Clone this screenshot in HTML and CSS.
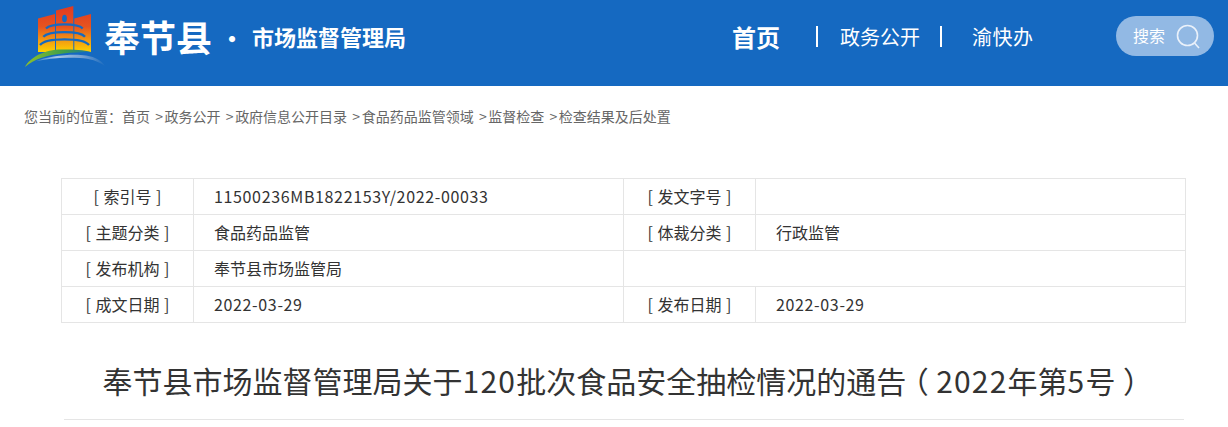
FILE: index.html
```html
<!DOCTYPE html>
<html lang="zh-CN">
<head>
<meta charset="utf-8">
<title>奉节县市场监督管理局</title>
<link rel="stylesheet" href="styles.css">
</head>
<body>
<header class="header">
  <div class="brand">
    <svg class="logo" width="82" height="62" viewBox="0 0 82 62" aria-hidden="true">
      <defs>
        <linearGradient id="sky" gradientUnits="userSpaceOnUse" x1="0" y1="1" x2="0" y2="47">
          <stop offset="0" stop-color="#df3a22"/>
          <stop offset="0.45" stop-color="#e6541f"/>
          <stop offset="0.75" stop-color="#f39a12"/>
          <stop offset="1" stop-color="#fdd300"/>
        </linearGradient>
        <linearGradient id="ground" x1="0" y1="0" x2="1" y2="0">
          <stop offset="0" stop-color="#8cc02c"/>
          <stop offset="0.6" stop-color="#3f9e4a"/>
          <stop offset="1" stop-color="#1b74a8"/>
        </linearGradient>
        <linearGradient id="wave" x1="0" y1="0" x2="1" y2="0">
          <stop offset="0" stop-color="#2f7ac8"/>
          <stop offset="0.3" stop-color="#a9c6e6"/>
          <stop offset="0.7" stop-color="#6f9dd0"/>
          <stop offset="1" stop-color="#1b6cc0"/>
        </linearGradient>
      </defs>
      <path d="M14 13.5 L31 9 V47 H14Z" fill="url(#sky)"/>
      <path d="M32 5.5 L49.3 1 V47 H32Z" fill="url(#sky)"/>
      <path d="M50.3 13.5 L67 9 V47 H50.3Z" fill="url(#sky)"/>
      <ellipse cx="40.5" cy="13.5" rx="2.4" ry="3.8" fill="#1569c1"/>
      <path d="M22 23.5 C27 18 54 18 58.7 23.5 M19.3 31.7 C25 25.5 56 25.5 61 31.7 M16 40 C22 32.5 59 32.5 65 40" stroke="#1569c1" stroke-width="2.3" fill="none"/>
      <path d="M1 62 C6 52 22 44 39 44.5 C50 44.5 60 45 67 47 C58 47 48 47.5 39 48.5 C24 50 10 54 1 62Z" fill="url(#ground)"/>
      <path d="M11 56.5 C24 51 48 48.5 62 50.5 C72 52 78 56 81 61 C74 56 66 53.5 56 53 C40 52 24 53 11 56.5Z" fill="url(#wave)"/>
    </svg>
    <span class="county">奉节县</span>
    <span class="dot">·</span>
    <span class="bureau">市场监督管理局</span>
  </div>
  <nav class="nav">
    <a class="nav-home">首页</a>
    <i class="sep"></i>
    <a class="nav-item">政务公开</a>
    <i class="sep"></i>
    <a class="nav-item nav-last">渝快办</a>
  </nav>
  <div class="search">
    <span class="search-label">搜索</span>
    <svg width="26" height="28" viewBox="0 0 26 28" aria-hidden="true">
      <circle cx="11.5" cy="11.5" r="10" fill="none" stroke="#eaf1fa" stroke-width="1.6"/>
      <path d="M18.5 19 L23 24" stroke="#eaf1fa" stroke-width="1.6" fill="none"/>
    </svg>
  </div>
</header>
<div class="crumbs">您当前的位置<span class="tc">：</span>首页<span class="gt">&gt;</span>政务公开<span class="gt">&gt;</span>政府信息公开目录<span class="gt">&gt;</span>食品药品监管领域<span class="gt">&gt;</span>监督检查<span class="gt">&gt;</span>检查结果及后处置</div>
<table class="meta">
  <colgroup><col class="c1"><col class="c2"><col class="c3"><col class="c4"></colgroup>
  <tr><th>[ 索引号 ]</th><td class="num">11500236MB1822153Y/2022-00033</td><th>[ 发文字号 ]</th><td></td></tr>
  <tr><th>[ 主题分类 ]</th><td>食品药品监管</td><th>[ 体裁分类 ]</th><td>行政监管</td></tr>
  <tr><th>[ 发布机构 ]</th><td>奉节县市场监管局</td><td colspan="2"></td></tr>
  <tr><th>[ 成文日期 ]</th><td class="num">2022-03-29</td><th>[ 发布日期 ]</th><td class="num">2022-03-29</td></tr>
</table>
<h1 class="title">奉节县市场监督管理局关于<span class="digits">120</span>批次食品安全抽检情况的通告<span class="paren">（</span><span class="digits">2022</span>年第<span class="digits">5</span>号<span class="paren">）</span></h1>
</body>
</html>
```
FILE: styles.css
```css
* { box-sizing: border-box; }
html, body { margin: 0; padding: 0; }
body {
  background: #fff;
  font-family: "Noto Sans CJK SC", "Open Sans", sans-serif;
  color: #333;
  height: 427px;
  overflow: hidden;
}
.tc { font-family: "Noto Sans CJK TC", sans-serif; }
.header {
  height: 86px;
  background: #1569c1;
  display: flex;
  align-items: flex-start;
  color: #fff;
  padding: 0 14px 0 24px;
}
.brand { display: flex; align-items: center; width: 660px; height: 72px; }
.logo { flex: none; margin-right: -2px; }
.county { font-size: 36px; font-weight: 700; line-height: 1; }
.dot { font-size: 24px; font-weight: 700; width: 40px; text-align: center; line-height: 1; padding-top: 3px; }
.bureau { font-size: 22px; font-weight: 700; line-height: 1; }
.nav { display: flex; align-items: center; height: 73px; margin-left: 48px; }
.nav-home { font-size: 24px; font-weight: 700; width: 84px; }
.sep { width: 2px; height: 21px; background: #fff; }
.nav-item { font-size: 20px; margin-left: 22px; margin-right: 20px; white-space: nowrap; }
.nav-last { margin-left: 30px; margin-right: 0; letter-spacing: 0.5px; }
.search {
  width: 98px; height: 40px; margin-top: 16px; margin-left: auto;
  border-radius: 20px;
  background: #92b9e4;
  display: flex; align-items: center;
  padding-left: 17px; gap: 11px;
  font-size: 16px; color: #fff;
}
.search-label { padding-bottom: 2px; }
.search svg { margin-top: 4px; }
.crumbs {
  font-size: 14px; color: #666; line-height: 20px;
  padding: 20px 0 0 24px; height: 92px;
}
.gt { margin: 0 1.6px 0 5.2px; }
.meta {
  border-collapse: collapse; table-layout: fixed;
  width: 1124px; margin-left: 61px;
  font-size: 16px; color: #333;
}
.c1 { width: 132px; } .c2 { width: 430px; } .c3 { width: 132px; } .c4 { width: 430px; }
.meta th, .meta td { height: 36px; border: 1px solid #e5e5e5; padding: 0 0 2px; font-weight: 400; }
.meta th { text-align: center; word-spacing: 1px; }
.meta td { text-align: left; padding-left: 20px; }
.meta .num { letter-spacing: 0.65px; }
.title {
  margin: 0 0 0 64px; width: 1120px;
  padding: 18px 0 0;
  font-size: 30px; font-weight: 400; color: #333;
  text-align: center; line-height: 78px; height: 97px;
  border-bottom: 1px solid #e5e5e5;
  white-space: nowrap;
}
.digits { letter-spacing: 1.2px; }
.paren {
  display: inline-block; width: 30px; text-align: center;
  font-feature-settings: "halt";
}
```
